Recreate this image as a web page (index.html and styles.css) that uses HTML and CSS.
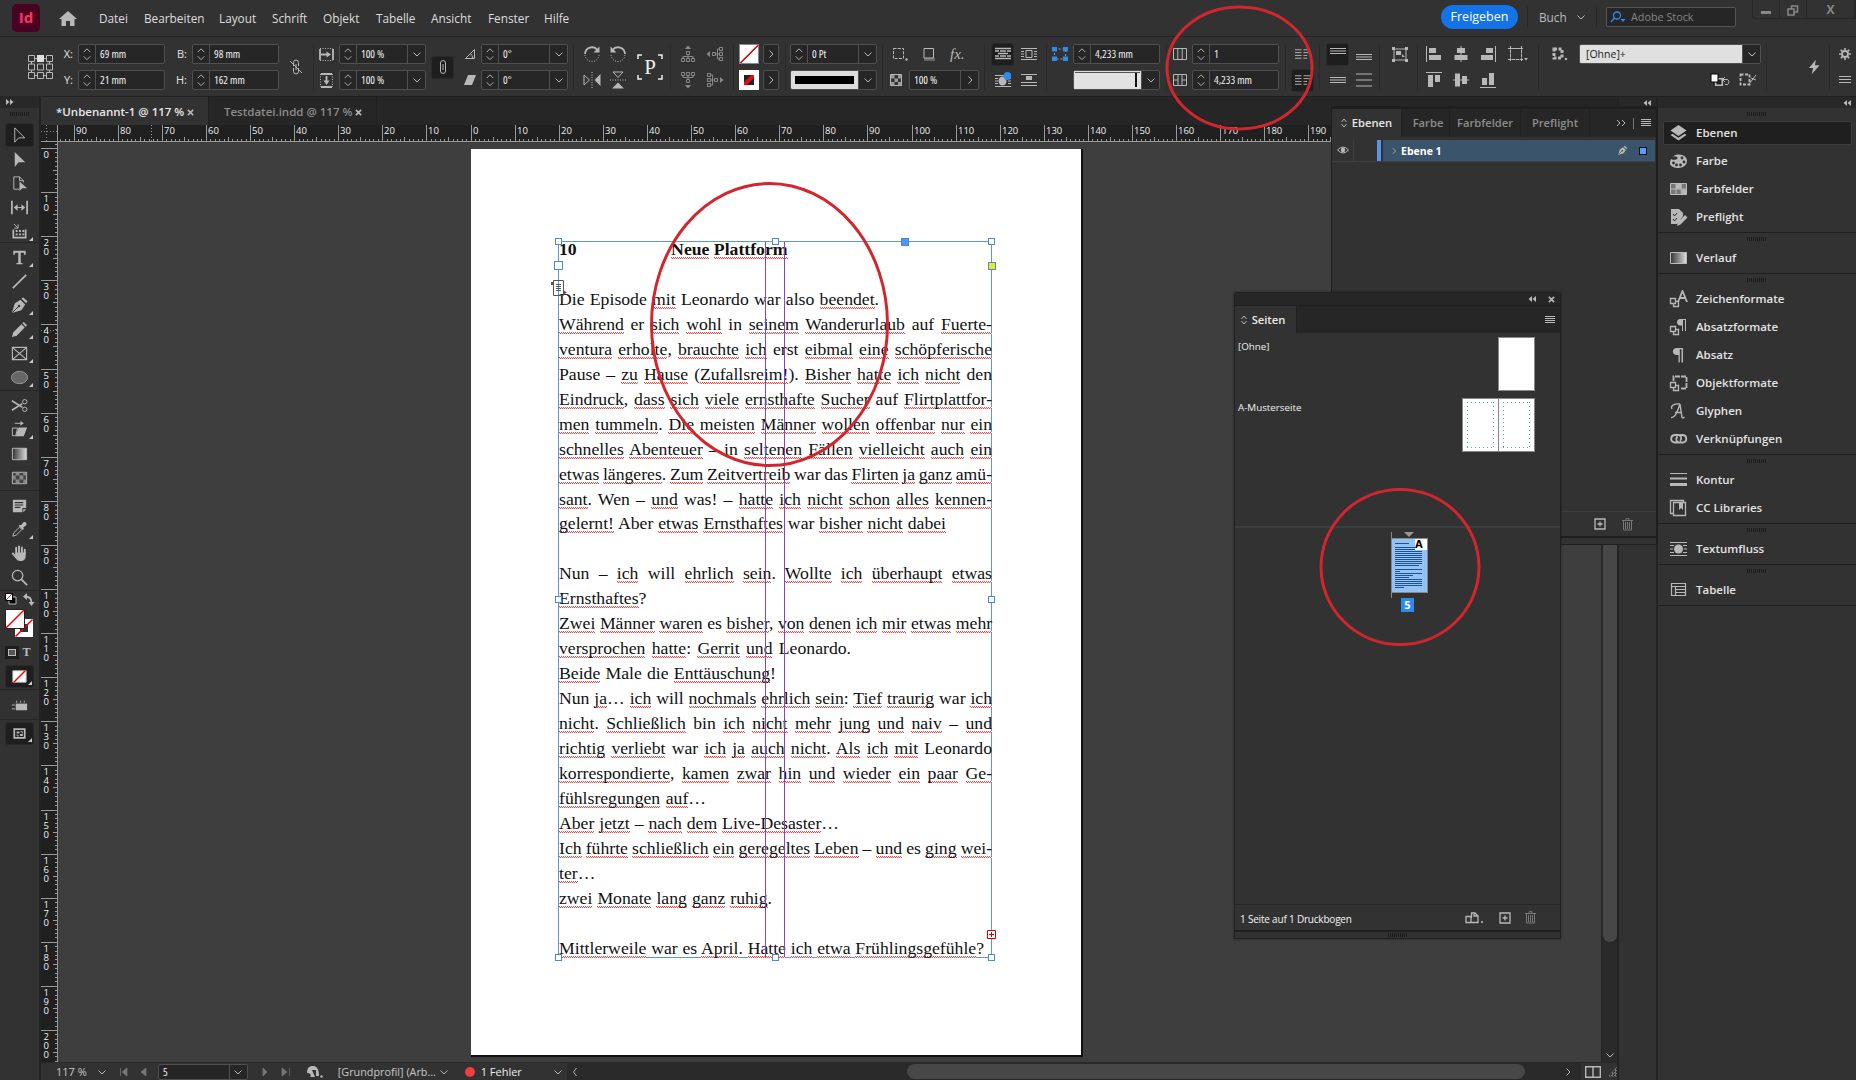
FILE: index.html
```html
<!DOCTYPE html>
<html lang="de">

<head>
    <meta charset="utf-8">
    <title>InDesign</title>
    <link rel="stylesheet" href="styles.css">
</head>

<body>
    <svg class="defs">
        <linearGradient id="grad"><stop offset="0" stop-color="#333"/><stop offset="1" stop-color="#ddd"/></linearGradient>
        <symbol id="spin" viewBox="0 0 17 18"><path d="M5 7l3.500-3.500L12 7M5 11.500l3.500 3.500L12 11.500" class="s"/></symbol>
        <symbol id="down" viewBox="0 0 10 10"><path d="M1.500 3.500L5 7l3.500-3.500" class="s"/></symbol>
        <symbol id="right" viewBox="0 0 10 10"><path d="M3.500 1.500L7 5 3.500 8.500" class="s"/></symbol>
        <symbol id="left" viewBox="0 0 10 10"><path d="M6.500 1L3.500 5l3 4" class="s"/></symbol>
        <symbol id="menu" viewBox="0 0 12 10"><path d="M0 1.500h12M0 4.500h12M0 7.500h12" class="s"/></symbol>
        <symbol id="menu4" viewBox="0 0 10 8"><path d="M0 .5h10M0 2.500h10M0 4.500h10M0 6.500h10" class="s"/></symbol>
        <symbol id="dbl" viewBox="0 0 8 6"><path d="M4 0v6L.5 3zM8 0v6L4.500 3z" class="f"/></symbol>
        <symbol id="sort" viewBox="0 0 6 10"><path d="M.5 4L3 1l2.500 3M.5 6L3 9l2.500-3" class="s"/></symbol>
        <symbol id="cross" viewBox="0 0 8 8"><path d="M1 1l6 6M7 1L1 7" class="s2"/></symbol>
        <symbol id="home" viewBox="0 0 18 15"><path d="M9 0L0 8h2.500v7h4.500v-5h4v5h4.500V8H18z" class="f"/></symbol>
        <symbol id="ref" viewBox="0 0 25 26"><path d="M.5 1.500h6v6h-6zM18.500 1.500h6v6h-6zM.5 10h6v6h-6zM9.500 10h6v6h-6zM18.500 10h6v6h-6zM.5 18.500h6v6h-6zM9.500 18.500h6v6h-6zM18.500 18.500h6v6h-6zM6.500 4.500h3M15.500 4.500h3M6.500 21.500h3M15.500 21.500h3M3.500 7.500v3M3.500 16v3M21.500 7.500v3M21.500 16v3" class="s"/><path d="M9 1h7v7H9z" fill="#e0e0e0"/></symbol>
        <symbol id="unlink" viewBox="0 0 14 16"><path d="M4.500 7V3.500a2.500 2.500 0 015 0V7M4.500 9v3.500a2.500 2.500 0 005 0V9M7 5v6M1 2l12 12" class="s"/></symbol>
        <symbol id="chain" viewBox="0 0 14 16"><path d="M4.500 8V4a2.500 2.500 0 015 0v4M4.500 8v4a2.500 2.500 0 005 0V8M7 5v6" class="s"/></symbol>
        <symbol id="scx" viewBox="0 0 15 15"><path d="M1 1.500h13M1 13.500h13" class="s dot"/><path d="M1 2v11M14 2v11M2 7.500h6" class="s2"/><path d="M7.500 4.500l4.500 3-4.500 3z" class="f"/></symbol>
        <symbol id="scy" viewBox="0 0 15 15"><path d="M1.500 1v13M13.500 1v13" class="s dot"/><path d="M2 1h11M2 14h11M7.500 3v5" class="s2"/><path d="M4.500 7.500l3 4.500 3-4.500z" class="f"/></symbol>
        <symbol id="angle" viewBox="0 0 12 12"><path d="M10.500 1.500L1.500 10.500h9M6 5.500c2 1 2.500 3 2.500 5M10.500 1.500v9" class="s"/></symbol>
        <symbol id="shear" viewBox="0 0 12 12"><path d="M4 1h8L8 11H0z" class="f"/></symbol>
        <symbol id="rot" viewBox="0 0 18 18"><path d="M2 9a7 7 0 0112.500-4" class="s2"/><path d="M16.500 1.500v6h-6z" class="f"/><path d="M2 10a7 7 0 0014-1" class="s dot"/></symbol>
        <symbol id="flip" viewBox="0 0 18 18"><path d="M1 4l5.500 5L1 14z" class="s"/><path d="M17.500 3v12L11.500 9z" class="f"/><path d="M9 1v16" class="s dot"/></symbol>
        <symbol id="flipv" viewBox="0 0 18 18"><path d="M4 1l5 5.500L14 1z" class="s"/><path d="M3 17.500h12L9 11.500z" class="f"/><path d="M1 9h16" class="s dot"/></symbol>
        <symbol id="tree" viewBox="0 0 18 18"><path d="M7.500 6.500h3v3h-3zM2.500 13.500h3v3h-3zM7.500 13.500h3v3h-3zM12.500 13.500h3v3h-3zM9 9.500v4M4 13v-1.500h10V13" class="s"/><path d="M6 4l3-3.500L12 4z" class="f"/></symbol>
        <symbol id="corner" viewBox="0 0 16 14"><path d="M1.500 1.500h10v10h-10z" class="s" stroke-dasharray="3 1.300"/><circle cx="14.500" cy="12.500" r="1.200" class="f"/></symbol>
        <symbol id="shadow" viewBox="0 0 14 14"><path d="M2 11h11v3H2z" fill="#666"/><path d="M2 1.500h9.500v9.500H2z" class="s"/></symbol>
        <symbol id="check" viewBox="0 0 12 12"><path d="M.5.5h11v11H.5z" class="s"/><path d="M1 1h3.500v3.500H1zM8 1h3v3.500H8zM4.500 4.500H8V8H4.500zM1 8h3.500v3H1zM8 8h3v3H8z" fill="#999"/></symbol>
        <symbol id="wrap0" viewBox="0 0 16 14"><path d="M0 1.500h16M0 4h4M5 4h6M12 4h4M3 6.500h10M0 9h4M5 9h6M12 9h4M0 11.500h16" class="s" stroke-width="1.300"/></symbol>
        <symbol id="wrap1" viewBox="0 0 16 14"><path d="M0 1.500h16M0 12.500h16M0 4.500h3M13 4.500h3M0 7h3M13 7h3M0 9.500h3M13 9.500h3M5 3.500h6v7H5z" class="s"/></symbol>
        <symbol id="wrap2" viewBox="0 0 16 16"><path d="M0 3.500h16M0 14.500h16M0 6.500h3M13 6.500h3M0 9h3M13 9h3M0 11.500h3M13 11.500h3" class="s"/><ellipse cx="7.500" cy="9" rx="4" ry="4.500" class="f"/><circle cx="12.500" cy="4" r="4" fill="#2d8ceb"/></symbol>
        <symbol id="wrap3" viewBox="0 0 16 14"><path d="M0 1.500h16M0 9.500h16M0 12.500h16" class="s"/><path d="M5 3h6v4H5z" class="f"/></symbol>
        <symbol id="bluesq" viewBox="0 0 16 14"><path d="M2.500 2h11v10h-11z" fill="none" stroke="#999" stroke-dasharray="2 2"/><path d="M0 0h5v4.500H0zM11 0h5v4.500h-5zM0 9.500h5V14H0zM11 9.500h5V14h-5z" fill="#2d8ceb"/></symbol>
        <symbol id="cols" viewBox="0 0 14 14"><path d="M.5 1.500h13v11H.5zM4.800 1.500v11M9.200 1.500v11" class="s"/></symbol>
        <symbol id="gut" viewBox="0 0 14 14"><path d="M.5 1.500h13v11H.5zM5 1.500v11M9 1.500v11M1 7h4M9 7h4" class="s"/></symbol>
        <symbol id="bal" viewBox="0 0 16 12"><path d="M0 1.500h7M9 1.500h7M0 4.500h7M9 4.500h7M0 7.500h7M9 7.500h4M0 10.500h7M9 10.500h4" class="s"/></symbol>
        <symbol id="vtop" viewBox="0 0 16 14"><path d="M0 1.500h16M0 4h16M0 6.500h16" class="s"/></symbol>
        <symbol id="vbot" viewBox="0 0 16 14"><path d="M0 7.500h16M0 10h16M0 12.500h16" class="s"/></symbol>
        <symbol id="vmid" viewBox="0 0 16 14"><path d="M0 4.500h16M0 7h16M0 9.500h16" class="s"/></symbol>
        <symbol id="vjus" viewBox="0 0 16 14"><path d="M0 1h16M0 7h16M0 13h16" class="s"/></symbol>
        <symbol id="fit" viewBox="0 0 16 15"><path d="M2 2h12v11H2z" class="s"/><path d="M0 0h3v3H0zM13 0h3v3h-3zM0 12h3v3H0zM13 12h3v3h-3zM4 4h5v4H4zM10 7l3 3h-3z" class="f"/></symbol>
        <symbol id="al" viewBox="0 0 16 16"><path d="M.5 0v16" class="s"/><path d="M3 2h7v5H3zM3 9h12v5H3z" class="f"/></symbol>
        <symbol id="ac" viewBox="0 0 16 16"><path d="M8 0v16" class="s"/><path d="M4 2h8v5H4zM1.500 9h13v5h-13z" class="f"/></symbol>
        <symbol id="tf" viewBox="0 0 20 16"><path d="M2.500 2.500h11v11h-11zM0 2.500h16M0 13.500h16M2.500 0v16M13.500 0v16" class="s" stroke-dasharray="3 1"/><path d="M16 12h4l-2 2.500z" class="f"/></symbol>
        <symbol id="mask" viewBox="0 0 18 14"><path d="M4 2h8v9H4z" class="s" stroke-width="3" stroke-dasharray="3 1.500"/><circle cx="16" cy="12" r="1.200" class="f"/></symbol>
        <symbol id="clr" viewBox="0 0 20 14"><path d="M5 5h8v8H5z" fill="#bbb"/><path d="M6.500 6.500h5v5h-5z" fill="#222"/><path d="M1 1h7v8H1z" fill="#fff" stroke="#000"/><path d="M15 4l-2.500 2.500L15 9M13 6.500h4c2.500 0 2.500 5 0 5h-2" class="s"/></symbol>
        <symbol id="clr2" viewBox="0 0 18 14"><path d="M1.500 1.500h9v10h-9z" class="s2" stroke-dasharray="3 1.500"/><path d="M10 11l7-9M12 5l5 2" class="s"/></symbol>
        <symbol id="bolt" viewBox="0 0 12 16"><path d="M7.500 0L0 9h4.500L3 16l8.500-10H6.500z" class="f"/></symbol>
        <symbol id="gear" viewBox="0 0 12 12"><circle cx="6" cy="6" r="3" class="s2"/><path d="M6 0v12M0 6h12M1.700 1.700l8.600 8.600M10.300 1.700l-8.600 8.600" class="s" stroke-width="1.600" stroke-dasharray="2.300 7.400"/></symbol>
        <symbol id="search" viewBox="0 0 16 12"><circle cx="7" cy="4.500" r="3.500" fill="none" stroke="#2d8ceb" stroke-width="1.300"/><path d="M4.500 7L1 11" stroke="#2d8ceb" stroke-width="1.400"/><path d="M10.500 8h5l-2.500 3z" fill="#2d8ceb"/></symbol>
        <symbol id="restore" viewBox="0 0 12 11"><path d="M4.500 1h6v6h-6z" fill="none" stroke="#888" stroke-width="1.500"/><path d="M1 4h6v6H1z" fill="#323232" stroke="#888" stroke-width="1.500"/></symbol>
        <symbol id="eye" viewBox="0 0 12 8"><path d="M.5 4Q6-2 11.500 4 6 10 .5 4z" class="s"/><circle cx="6" cy="4" r="2.200" class="f"/></symbol>
        <symbol id="new" viewBox="0 0 12 12"><path d="M1 1h10v10H1zM6 3.500v5M3.500 6h5" class="s" stroke-width="1.300"/></symbol>
        <symbol id="trash" viewBox="0 0 11 13"><path d="M0 2.500h11M4 2V.7h3V2M1.500 3v9h8V3M3.500 4v7M5.500 4v7M7.500 4v7" fill="none" stroke="#777"/></symbol>
        <symbol id="pgsize" viewBox="0 0 20 13"><path d="M1 5.500h5v6H1zM6 11.500h7V5l-3-3H6.500v5M9 2v3h4" class="s" stroke-width="1.300"/><circle cx="17" cy="11" r="1.100" class="f"/></symbol>

        <!-- tools -->
        <symbol id="t-sel" viewBox="0 0 20 20"><path d="M5 2v15l4-4.500h6.500z" class="s"/></symbol>
        <symbol id="t-dir" viewBox="0 0 20 20"><path d="M5 2v16l4-5h7z" class="f"/></symbol>
        <symbol id="t-page" viewBox="0 0 20 20"><path d="M10 16H4V3h6l4 4v2M10 3v4h4" class="s"/><path d="M10 8v10l3-3h5z" class="f"/></symbol>
        <symbol id="t-gap" viewBox="0 0 20 20"><path d="M2 3v14M18 3v14" class="s2"/><path d="M5 10h10" class="s"/><path d="M4 10l4-3.500v7zM16 10l-4-3.500v7z" class="f"/></symbol>
        <symbol id="t-cont" viewBox="0 0 20 20"><path d="M3.500 8v8.500h13V8" class="s2"/><path d="M4 2l4 4M8.500 2.500V6.500H4.500" class="s"/><path d="M6 8.500h2v2H6zM9.500 8.500h2v2h-2zM13 8.500h2v2h-2zM6 12h2v2H6zM9.500 12h2v2h-2zM13 12h2v2h-2z" class="f"/></symbol>
        <symbol id="t-type" viewBox="0 0 20 20"><path d="M3.500 3h13v4h-1.500l-.5-2h-3.200v10.500l2 .5v1H6.700v-1l2-.5V5H5.500L5 7H3.500z" class="f"/></symbol>
        <symbol id="t-line" viewBox="0 0 20 20"><path d="M3 17L17 3" class="s2"/></symbol>
        <symbol id="t-pen" viewBox="0 0 20 20"><path d="M2 18l3-10 6-4 5 5-4 6z" class="f"/><path d="M12 2.500l5 5 1.500-2-4.500-4z" class="f"/><path d="M2.500 17.500L9 11" stroke="#323232"/><circle cx="9.500" cy="10.500" r="1.300" fill="#323232"/></symbol>
        <symbol id="t-pencil" viewBox="0 0 20 20"><path d="M2 18l1.500-5L12 4.500l3.500 3.500L7 16.500zM13 3.500l1.500-1.500L18 5.500 16.500 7z" class="f"/></symbol>
        <symbol id="t-frame" viewBox="0 0 20 20"><path d="M2.500 3.500h15v13h-15zM2.500 3.500l15 13M17.500 3.500l-15 13" class="s" stroke-width="1.200"/></symbol>
        <symbol id="t-ell" viewBox="0 0 20 20"><ellipse cx="10" cy="10" rx="8.500" ry="6.500" fill="#666" stroke="#999"/></symbol>
        <symbol id="t-cut" viewBox="0 0 20 20"><path d="M2 5l11 7M2 15l11-7" class="s2"/><circle cx="15.500" cy="6" r="2.300" class="s"/><circle cx="15.500" cy="14" r="2.300" class="s"/></symbol>
        <symbol id="t-free" viewBox="0 0 20 20"><path d="M9 8h9l-3.500 9H6z" class="f"/><path d="M2.500 8.500H8l-2 8H2.500zM5 3.500h7" class="s"/><path d="M11 1l3.500 2.500L11 6z" class="f"/></symbol>
        <symbol id="t-grad" viewBox="0 0 20 20"><path d="M2.500 4.500h15v12h-15z" fill="url(#grad)" stroke="#bbb"/></symbol>
        <symbol id="t-feather" viewBox="0 0 20 20"><path d="M2.500 4.500h15v12h-15z" fill="#444" stroke="#bbb"/><path d="M6 5h4v3H6zM14 5h3v3h-3zM3 8h3v4H3zM10 8h4v4h-4zM6 12h4v4H6zM14 12h3v4h-3z" fill="#888"/></symbol>
        <symbol id="t-note" viewBox="0 0 20 20"><path d="M3 4h14v8.500h-4V17H3zM14 14h3l-3 3z" class="f"/><path d="M5 7h9M5 9.500h9M5 12h6" stroke="#323232" stroke-width="1.200"/></symbol>
        <symbol id="t-eye" viewBox="0 0 20 20"><path d="M3 17l1-3.500 6-6 2.500 2.500-6 6z" class="s"/><path d="M9 6l1.500-1 1 .5 2.500-3c2-1.500 4.500 1 3 3l-3 2.500.5 1.500-1 1z" class="f"/></symbol>
        <symbol id="t-hand" viewBox="0 0 20 20"><path d="M6.500 10V4M9.500 9V2.500M12.500 9.500V3.500M15.500 10.500V6M3 10l3.500 4" fill="none" stroke="#b8b8b8" stroke-width="2" stroke-linecap="round"/><path d="M5.500 9h11v4c0 3-2 5-5 5-3.500 0-4-1-6-4z" class="f"/></symbol>
        <symbol id="t-zoom" viewBox="0 0 20 20"><circle cx="8" cy="8" r="5.500" class="s" stroke-width="1.300"/><path d="M12 12l6 6" class="s2"/></symbol>
        <symbol id="t-view" viewBox="0 0 20 20"><path d="M6 8h12v7H6z" class="f"/><path d="M2 9.500h3M2 13.500h3M7 5v2M11 5v2M15 5v2" class="s"/></symbol>
        <symbol id="t-mode" viewBox="0 0 20 20"><path d="M4.500 5.500h11v9h-11z" class="s2"/><path d="M7 8h3v2H7zM10.500 10.500h3v2h-3z" class="f"/><path d="M11 8h2v2M7.500 11v1.500h2" class="s"/></symbol>

        <!-- panel icons -->
        <symbol id="p-layers" viewBox="0 0 19 18"><path d="M9.500 1l8 5.500-8 5.500-8-5.500z" class="f"/><path d="M1.500 11l2-1.300 6 4 6-4 2 1.300-8 5.500z" class="f"/></symbol>
        <symbol id="p-color" viewBox="0 0 19 18"><path d="M1 11c0-6 5-8.500 9-8.500 5 0 8 3 8 6.500 0 4-4 7-8.500 7S1 14.500 1 11z" class="f"/><g fill="#323232"><ellipse cx="5" cy="6" rx="3.500" ry="1.800"/><circle cx="13" cy="6" r="1.400"/><circle cx="15" cy="10" r="1.400"/><circle cx="11.500" cy="13" r="1.400"/><circle cx="7.500" cy="13" r="1.400"/><circle cx="4.500" cy="11" r="1.400"/></g></symbol>
        <symbol id="p-swatch" viewBox="0 0 19 18"><path d="M1.500 3.500h16v11h-16z" fill="#777" stroke="#bbb"/><path d="M7 4h5v5H7zM12.500 9.500H17V14h-4.500z" class="f"/><path d="M1.500 9h16M7 4v10M12.200 4v10" class="s"/></symbol>
        <symbol id="p-pre" viewBox="0 0 19 18"><path d="M2 1h8l4 4v3l-6 8H2zM9 14l7-7 2.500 2.500-7 7L8 18z" class="f"/><path d="M4 6l1.500 2L8 5M4 11l1.500 2L8 10" stroke="#323232" fill="none"/></symbol>
        <symbol id="p-grad" viewBox="0 0 19 18"><path d="M1.500 3.500h16v11h-16z" fill="url(#grad)" stroke="#bbb"/></symbol>
        <symbol id="p-over" viewBox="0 0 19 18"><path d="M1.500 8.500h5v5h-5zM4.500 13.500v3h5v-5h-3" class="s" stroke-width="1.300"/></symbol>
        <symbol id="p-char" viewBox="0 0 19 18"><use href="#p-over"/><path d="M9 12l4.500-11L18 12M10.500 8h6" class="s2"/></symbol>
        <symbol id="p-para" viewBox="0 0 19 18"><use href="#p-over"/><path d="M17 1h-6c-4 0-4 6.500 0 6.500h2V13h1V2h2v11h1z" class="f"/></symbol>
        <symbol id="p-pil" viewBox="0 0 19 18"><path d="M14 2H8C2.500 2 2.500 9 8 9h1.500v7.500h1.300V3.300h1.700v13.200H14z" class="f"/></symbol>
        <symbol id="p-obj" viewBox="0 0 19 18"><use href="#p-over"/><path d="M4.500 7V2.500h13v12H11" class="s2" stroke-dasharray="5 1"/></symbol>
        <symbol id="p-glyph" viewBox="0 0 19 18"><path d="M2 15.500c4 1 7-7 9-13.500l2 13.500c.5.800 1.500.5 2.500-.5M3 7C1 3 6 1.500 11 2M6 10.500h6.500" class="s" stroke-width="1.400"/></symbol>
        <symbol id="p-link" viewBox="0 0 19 18"><path d="M9 12.500H5.500a4 3.800 0 010-7.500H9c3 0 4.500 3.500 2 6M10.500 5H14a4 3.800 0 010 7.500h-3.500c-3 0-4.500-3.500-2-6" class="s2"/></symbol>
        <symbol id="p-stroke" viewBox="0 0 19 18"><path d="M1 2h17v1H1zM1 6.500h17v2H1zM1 12h17v3H1z" class="f"/></symbol>
        <symbol id="p-cc" viewBox="0 0 19 18"><path d="M4.500 3.500h12v13h-12zM4 14.500H1.500V1.500h13V3" class="s" stroke-width="1.300"/><path d="M10 4h4v7l-2-2-2 2z" class="f"/></symbol>
        <symbol id="p-flow" viewBox="0 0 19 18"><path d="M1 2.500h17M1 15.500h17M1 5.500h4M14 5.500h4M1 9h3M15 9h3M1 12.500h4M14 12.500h4" class="s" stroke-width="1.200"/><circle cx="9.500" cy="9" r="4.500" class="f"/></symbol>
        <symbol id="p-table" viewBox="0 0 19 18"><path d="M2.500 2.500h14v12h-14zM2.500 5.500h14M6.500 5.500v9M6.500 8.500h10M6.500 11.500h10" class="s" stroke-width="1.200"/></symbol>
    </svg>

    <div class="topbar">
        <div class="logo">Id</div>
        <svg class="home"><use href="#home"/></svg>
        <div class="menus">
            <span class="m1">Datei</span><span class="m2">Bearbeiten</span><span class="m3">Layout</span><span class="m4">Schrift</span><span class="m5">Objekt</span><span class="m6">Tabelle</span><span class="m7">Ansicht</span><span class="m8">Fenster</span><span class="m9">Hilfe</span>
        </div>
        <div class="share">Freigeben</div>
        <div class="space">Buch <svg width="10" height="10"><use href="#down"/></svg></div>
        <div class="stock"><svg width="16" height="12"><use href="#search"/></svg>Adobe Stock</div>
        <div class="winbtns"><span class="min"></span><span><svg width="12" height="11"><use href="#restore"/></svg></span><span class="x">X</span></div>
    </div>

    <div class="control">
        <div class="g g1">
            <svg class="tall" width="25" height="26"><use href="#ref"/></svg>
            <label>X:</label>
            <div class="field"><svg class="spin"><use href="#spin"/></svg><b>69 mm</b></div>
            <label>B:</label>
            <div class="field"><svg class="spin"><use href="#spin"/></svg><b>98 mm</b></div>
            <svg class="tall" width="14" height="16"><use href="#unlink"/></svg>
            <label>Y:</label>
            <div class="field"><svg class="spin"><use href="#spin"/></svg><b>21 mm</b></div>
            <label>H:</label>
            <div class="field"><svg class="spin"><use href="#spin"/></svg><b>162 mm</b></div>
        </div>
        <div class="g g2">
            <svg class="i15"><use href="#scx"/></svg>
            <div class="field"><svg class="spin"><use href="#spin"/></svg><b>100 %</b><i><svg class="i10"><use href="#down"/></svg></i></div>
            <div class="tall on chain"><svg width="14" height="16"><use href="#chain"/></svg></div>
            <svg class="i12"><use href="#angle"/></svg>
            <div class="field"><svg class="spin"><use href="#spin"/></svg><b>0°</b><i><svg class="i10"><use href="#down"/></svg></i></div>
            <svg class="i15"><use href="#scy"/></svg>
            <div class="field"><svg class="spin"><use href="#spin"/></svg><b>100 %</b><i><svg class="i10"><use href="#down"/></svg></i></div>
            <svg class="i12"><use href="#shear"/></svg>
            <div class="field"><svg class="spin"><use href="#spin"/></svg><b>0°</b><i><svg class="i10"><use href="#down"/></svg></i></div>
        </div>
        <div class="g g3">
            <svg class="i18"><use href="#rot"/></svg>
            <svg class="i18 mirror"><use href="#rot"/></svg>
            <div class="tall pbox"><svg width="26" height="26" viewBox="0 0 26 26"><path d="M1 5V1h4M21 1h4v4M1 21v4h4M21 25h4v-4" fill="none" stroke="#eee" stroke-width="1.500"/></svg><span>P</span></div>
            <svg class="i18"><use href="#flip"/></svg>
            <svg class="i18"><use href="#flipv"/></svg>
        </div>
        <div class="g g4 dim">
            <svg class="i18"><use href="#tree"/></svg>
            <svg class="i18 ccw"><use href="#tree"/></svg>
            <svg class="i18 flipy"><use href="#tree"/></svg>
            <svg class="i18 cw"><use href="#tree"/></svg>
        </div>
        <div class="g g5">
            <div class="none"></div>
            <div class="field"><i class="only"><svg class="i10"><use href="#right"/></svg></i></div>
            <div class="none ring"></div>
            <div class="field"><i class="only"><svg class="i10"><use href="#right"/></svg></i></div>
        </div>
        <div class="g g6">
            <div class="field"><svg class="spin"><use href="#spin"/></svg><b>0 Pt</b><i><svg class="i10"><use href="#down"/></svg></i></div>
            <div class="field"><div class="stroke"></div><i><svg class="i10"><use href="#down"/></svg></i></div>
        </div>
        <div class="g g7">
            <div class="trio"><svg width="16" height="14"><use href="#corner"/></svg><svg width="14" height="14"><use href="#shadow"/></svg><em>fx.</em></div>
            <svg class="i12"><use href="#check"/></svg>
            <div class="field"><b class="pad">100 %</b><i><svg class="i10"><use href="#right"/></svg></i></div>
        </div>
        <div class="g g8">
            <div class="on"><svg width="16" height="14"><use href="#wrap0"/></svg></div>
            <svg width="16" height="14"><use href="#wrap1"/></svg>
            <svg width="16" height="16"><use href="#wrap2"/></svg>
            <svg width="16" height="14"><use href="#wrap3"/></svg>
        </div>
        <div class="g g9">
            <svg width="16" height="14"><use href="#bluesq"/></svg>
            <div class="field"><svg class="spin"><use href="#spin"/></svg><b>4,233 mm</b></div>
            <span></span>
            <div class="field"><div class="cornerbox"></div><i><svg class="i10"><use href="#down"/></svg></i></div>
        </div>
        <div class="g g10">
            <svg width="14" height="14"><use href="#cols"/></svg>
            <div class="field"><svg class="spin"><use href="#spin"/></svg><b>1</b></div>
            <svg width="14" height="14"><use href="#gut"/></svg>
            <div class="field"><svg class="spin"><use href="#spin"/></svg><b>4,233 mm</b></div>
        </div>
        <div class="g g11">
            <svg width="15" height="12"><use href="#bal"/></svg>
            <div class="on"><svg width="15" height="12"><use href="#bal"/></svg></div>
        </div>
        <div class="g g12">
            <div class="on"><svg width="16" height="14"><use href="#vtop"/></svg></div>
            <svg width="16" height="14"><use href="#vbot"/></svg>
            <svg width="16" height="14"><use href="#vmid"/></svg>
            <svg width="16" height="14"><use href="#vjus"/></svg>
        </div>
        <div class="g g13"><svg width="16" height="15"><use href="#fit"/></svg></div>
        <div class="g g14">
            <svg class="i16"><use href="#al"/></svg>
            <svg class="i16"><use href="#ac"/></svg>
            <svg class="i16 mirror"><use href="#al"/></svg>
            <svg width="20" height="16"><use href="#tf"/></svg>
            <svg class="i16 cw"><use href="#al"/></svg>
            <svg class="i16 cw"><use href="#ac"/></svg>
            <svg class="i16 ccw"><use href="#al"/></svg>
        </div>
        <div class="g g15">
            <svg width="18" height="14"><use href="#mask"/></svg>
            <div class="field"><div class="style">[Ohne]+</div><i><svg class="i10"><use href="#down"/></svg></i></div>
            <div class="duo"><svg width="20" height="14"><use href="#clr"/></svg><svg width="18" height="14"><use href="#clr2"/></svg></div>
        </div>
        <div class="g g16"><svg class="tall" width="11" height="16"><use href="#bolt"/></svg></div>
        <div class="g g17"><svg class="i12"><use href="#gear"/></svg><svg width="12" height="10"><use href="#menu"/></svg></div>
    </div>

    <div class="main">
        <div class="tools">
            <div class="thead"><svg class="dbl mirror"><use href="#dbl"/></svg></div>
            <div class="grip"></div>
            <div class="tset first">
                <div class="tool on"><svg><use href="#t-sel"/></svg></div>
                <div class="tool"><svg><use href="#t-dir"/></svg></div>
                <div class="tool"><svg><use href="#t-page"/></svg></div>
                <div class="tool"><svg><use href="#t-gap"/></svg></div>
                <div class="tool more"><svg><use href="#t-cont"/></svg></div>
            </div>
            <div class="tset">
                <div class="tool more"><svg><use href="#t-type"/></svg></div>
                <div class="tool"><svg><use href="#t-line"/></svg></div>
                <div class="tool more"><svg><use href="#t-pen"/></svg></div>
                <div class="tool more"><svg><use href="#t-pencil"/></svg></div>
                <div class="tool more"><svg><use href="#t-frame"/></svg></div>
                <div class="tool more"><svg><use href="#t-ell"/></svg></div>
            </div>
            <div class="tset">
                <div class="tool"><svg><use href="#t-cut"/></svg></div>
                <div class="tool more"><svg><use href="#t-free"/></svg></div>
                <div class="tool"><svg><use href="#t-grad"/></svg></div>
                <div class="tool"><svg><use href="#t-feather"/></svg></div>
            </div>
            <div class="tset">
                <div class="tool"><svg><use href="#t-note"/></svg></div>
                <div class="tool more"><svg><use href="#t-eye"/></svg></div>
                <div class="tool"><svg><use href="#t-hand"/></svg></div>
                <div class="tool"><svg><use href="#t-zoom"/></svg></div>
            </div>
            <div class="tset colors">
                <svg width="30" height="14" viewBox="0 0 30 14"><path d="M4 4h7v7H4z" fill="#000" stroke="#bbb"/><path d="M.5.5h7v7h-7z" fill="#fff" stroke="#000"/><path d="M1 7l6-6" stroke="#e22"/><path d="M20 3.500c5 0 6.500 2 6.500 6" class="s2"/><path d="M18 3.500L22 0v7zM23.500 9h6l-3 4z" class="f"/></svg>
                <svg width="30" height="30" viewBox="0 0 30 30"><path d="M10 10h18v18H10z" fill="#fff"/><path d="M15 15h8v8h-8z" fill="#323232"/><path d="M10.500 27.500l17-17" stroke="#e00" stroke-width="1.500"/><path d="M.5.500h19v19H.5z" fill="#fff" stroke="#222"/><path d="M1 19L19 1" stroke="#e00" stroke-width="1.500"/></svg>
                <div class="ft"><span><u></u></span><b>T</b></div>
                <div class="tool on more"><svg viewBox="0 0 20 20"><path d="M3 4h14v12H3z" fill="#fff" stroke="#bbb"/><path d="M4 16L16 4" stroke="#e00" stroke-width="1.500"/></svg></div>
            </div>
            <div class="tset"><div class="tool wide"><svg><use href="#t-view"/></svg></div></div>
            <div class="tset"><div class="tool on more"><svg><use href="#t-mode"/></svg></div></div>
        </div>

        <div class="doc">
            <div class="tabs">
                <div class="tab active"><span>*Unbenannt-1 @ 117 %</span><svg width="7" height="7"><use href="#cross"/></svg></div>
                <div class="tab"><span>Testdatei.indd @ 117 %</span><svg width="7" height="7"><use href="#cross"/></svg></div>
            </div>
            <div class="rulerrow">
                <div class="origin"></div>
                <svg id="hruler" width="1559" height="17"></svg>
            </div>
            <div class="work">
                <svg id="vruler" width="17" height="920"></svg>
                <div class="paste">
                    <div class="page">
                        <div class="frame">
                            <div id="story"></div>
                            <i class="col c1"></i><i class="col c2"></i>
                            <i class="h tl"></i><i class="h tm"></i><i class="h tr"></i><i class="h ml"></i><i class="h mr"></i><i class="h bl"></i><i class="h bm"></i><i class="h br"></i>
                            <i class="h in"></i><i class="h blue"></i><i class="h yellow"></i>
                            <svg class="over" width="9" height="9" viewBox="0 0 9 9"><path d="M.5.5h8v8h-8z" fill="#fff" stroke="#c00"/><path d="M4.500 2v5M2 4.500h5" stroke="#c00"/></svg>
                            <svg class="anchor" width="16" height="18" viewBox="0 0 16 18"><path d="M2.500 1.500h10v15h-10zM5 5.500h5M5 7.500h5M5 9.500h5M5 11.500h5" fill="none" stroke="#555"/><path d="M0 3h3v3H0zM12 11l4 2.500-4 2.500z" fill="#555"/></svg>
                        </div>
                    </div>
                </div>
                <div class="vscroll"><div></div><svg class="i10"><use href="#down"/></svg></div>
            </div>
            <div class="status">
                <span class="z">117 %</span><svg class="i10 a"><use href="#down"/></svg>
                <svg class="nav" width="60" height="10" viewBox="0 0 60 10"><path d="M1.500 1v8M8 1v8L3 5zM27 1v8L22 5z" fill="#777" stroke="#777" stroke-width=".7"/></svg>
                <div class="field pg"><b>5</b><i><svg class="i10"><use href="#down"/></svg></i></div>
                <svg class="nav2" width="44" height="10" viewBox="0 0 44 10"><path d="M1 1v8l4-4zM20 1v8l5-4zM27.500 1v8" fill="#777" stroke="#777" stroke-width=".7"/></svg>
                <svg class="open" width="17" height="13" viewBox="0 0 17 13"><path d="M1 8C1 2 4 1 7 1s6 2 6 10h-3V5H6l3 7H4c2-2 0-4-3-4z" class="f"/><circle cx="15.500" cy="11.500" r="1.200" class="f"/></svg>
                <span class="prof">[Grundprofil] (Arb...</span><svg class="i10"><use href="#down"/></svg>
                <u class="dot"></u><span class="err">1 Fehler</span><svg class="i10 e"><use href="#down"/></svg>
                <div class="hscroll"><svg class="i10"><use href="#left"/></svg><div></div><svg class="i10"><use href="#right"/></svg></div>
                <svg class="split" width="16" height="12" viewBox="0 0 16 12"><path d="M.7.700h14.600v10.600H.7zM8 1v10" class="s" stroke-width="1.400"/></svg>
                <u class="sizer"></u>
            </div>
        </div>

        <div class="dockgap"><div class="dhead"><svg class="dbl"><use href="#dbl"/></svg></div></div>

        <div class="dock">
            <div class="dhead"><svg class="dbl"><use href="#dbl"/></svg></div>
            <div class="dset">
                <div class="grip"></div>
                <div class="item active"><svg><use href="#p-layers"/></svg>Ebenen</div>
                <div class="item"><svg><use href="#p-color"/></svg>Farbe</div>
                <div class="item"><svg><use href="#p-swatch"/></svg>Farbfelder</div>
                <div class="item"><svg><use href="#p-pre"/></svg>Preflight</div>
            </div>
            <div class="dset">
                <div class="grip"></div>
                <div class="item"><svg><use href="#p-grad"/></svg>Verlauf</div>
            </div>
            <div class="dset">
                <div class="grip"></div>
                <div class="item"><svg><use href="#p-char"/></svg>Zeichenformate</div>
                <div class="item"><svg><use href="#p-para"/></svg>Absatzformate</div>
                <div class="item"><svg><use href="#p-pil"/></svg>Absatz</div>
                <div class="item"><svg><use href="#p-obj"/></svg>Objektformate</div>
                <div class="item"><svg><use href="#p-glyph"/></svg>Glyphen</div>
                <div class="item"><svg><use href="#p-link"/></svg>Verknüpfungen</div>
            </div>
            <div class="dset">
                <div class="grip"></div>
                <div class="item"><svg><use href="#p-stroke"/></svg>Kontur</div>
                <div class="item"><svg><use href="#p-cc"/></svg>CC Libraries</div>
            </div>
            <div class="dset">
                <div class="grip"></div>
                <div class="item"><svg><use href="#p-flow"/></svg>Textumfluss</div>
            </div>
            <div class="dset">
                <div class="grip"></div>
                <div class="item"><svg><use href="#p-table"/></svg>Tabelle</div>
            </div>
        </div>
    </div>

    <div class="layers">
        <div class="ptabs">
            <div class="ptab active"><svg width="6" height="10"><use href="#sort"/></svg>Ebenen</div>
            <div class="ptab w2">Farbe</div>
            <div class="ptab w3">Farbfelder</div>
            <div class="ptab w4">Preflight</div>
            <div class="pmenu"><svg class="arr" width="10" height="8" viewBox="0 0 10 8"><path d="M1 1l3 3-3 3M6 1l3 3-3 3" class="s"/></svg><u></u><svg width="10" height="8"><use href="#menu4"/></svg></div>
        </div>
        <div class="row">
            <span class="eye"><svg width="12" height="8"><use href="#eye"/></svg></span>
            <span class="lock"></span>
            <span class="name"><svg width="8" height="8"><use href="#right"/></svg>Ebene 1<svg class="pen" width="11" height="11"><use href="#t-pen"/></svg><u></u></span>
        </div>
        <div class="pbody"></div>
        <div class="pfoot"><svg width="12" height="12"><use href="#new"/></svg><svg width="11" height="13"><use href="#trash"/></svg></div>
        <div class="pend"></div>
    </div>

    <div class="pages">
        <div class="phead"><svg class="dbl"><use href="#dbl"/></svg><svg width="7" height="7"><use href="#cross"/></svg></div>
        <div class="ptabs">
            <div class="ptab active"><svg width="6" height="10"><use href="#sort"/></svg>Seiten</div>
            <div class="pmenu"><svg width="10" height="8"><use href="#menu4"/></svg></div>
        </div>
        <div class="masters">
            <div class="master"><span>[Ohne]</span><div class="thumb"></div></div>
            <div class="master"><span>A-Musterseite</span><div class="thumb"><i></i></div><div class="thumb"><i></i></div></div>
        </div>
        <div class="spread">
            <div class="mark"></div>
            <div class="pthumb">
                <span>A</span>
                <div id="mini"></div>
            </div>
            <div class="num">5</div>
        </div>
        <div class="pgfoot"><span>1 Seite auf 1 Druckbogen</span><svg width="20" height="13"><use href="#pgsize"/></svg><svg width="12" height="12"><use href="#new"/></svg><svg width="11" height="13"><use href="#trash"/></svg></div>
        <div class="presize"><div class="grip"></div></div>
    </div>

    <svg class="marks" width="1856" height="1080">
        <ellipse cx="1239.500" cy="68" rx="72.500" ry="61"/>
        <ellipse cx="769.500" cy="324.500" rx="118" ry="141"/>
        <ellipse cx="1400" cy="567" rx="79" ry="77.500"/>
    </svg>

    <script src="script.js"></script>
</body>

</html>
```

FILE: styles.css
```css
* {
    box-sizing: border-box;
}

body {
    margin: 0;
    width: 1856px;
    height: 1080px;
    overflow: hidden;
    background: #323232;
    color: #e2e2e2;
    font: 11px/14px "Open Sans", "Noto Sans", sans-serif;
    display: flex;
    flex-direction: column;
}

.defs {
    position: absolute;
    width: 0;
    height: 0;
}

svg {
    display: block;
    flex: none;
}

.s { fill: none; stroke: #b8b8b8; }
.s2 { fill: none; stroke: #b8b8b8; stroke-width: 1.8; }
.f { fill: #b8b8b8; }
.dot { stroke-dasharray: 1 1.5; }

.i10 { width: 10px; height: 10px; }
.i12 { width: 12px; height: 12px; }
.i15 { width: 15px; height: 15px; }
.i16 { width: 16px; height: 16px; }
.i18 { width: 18px; height: 18px; }
.dbl { width: 8px; height: 6px; }

.mirror { transform: scaleX(-1); }
.flipy { transform: scaleY(-1); }
.cw { transform: rotate(90deg); }
.ccw { transform: rotate(-90deg); }

/* menu bar */
.topbar {
    height: 36px;
    flex: none;
    display: flex;
    align-items: flex-start;
    font-size: 11.800px;
}

.logo {
    width: 28px;
    height: 28px;
    margin: 4px 0 0 12px;
    border-radius: 5px;
    background: #49021f;
    color: #ff3366;
    font: bold 15px/26px "Open Sans", sans-serif;
    text-align: center;
}

.home {
    width: 18px;
    height: 15px;
    margin: 11px 22px 0 19px;
}

.menus {
    display: flex;
    padding-top: 10px;
    line-height: 16px;
    color: #ddd;
    width: 1342px;
}

.menus span { white-space: nowrap; }
.m1 { width: 45px; }
.m2 { width: 75px; }
.m3 { width: 53px; }
.m4 { width: 51px; }
.m5 { width: 53px; }
.m6 { width: 55px; }
.m7 { width: 57px; }
.m8 { width: 56px; }

.share {
    width: 77px;
    height: 24px;
    margin-top: 5px;
    border-radius: 12px;
    background: #1473e6;
    color: #fff;
    font-size: 12.500px;
    line-height: 24px;
    text-align: center;
}

.space {
    display: flex;
    align-items: center;
    gap: 9px;
    margin: 7px 0 0 9px;
    width: 70px;
    height: 20px;
    padding-left: 11px;
    border-left: 1px solid #262626;
    border-right: 1px solid #262626;
    color: #bbb;
}

.stock {
    display: flex;
    align-items: center;
    gap: 5px;
    width: 130px;
    height: 20px;
    margin: 7px 0 0 9px;
    padding-left: 3px;
    border: 1px solid #555;
    border-radius: 2px;
    background: #262626;
    color: #858585;
    font-size: 10.800px;
    white-space: nowrap;
}

.winbtns {
    display: flex;
    width: 104px;
    height: 19px;
    margin-left: 16px;
    border: 1px solid #282828;
    border-top: 0;
    border-radius: 0 0 0 4px;
    color: #888;
}

.winbtns span {
    width: 27px;
    display: flex;
    justify-content: center;
    padding-top: 5px;
    border-right: 1px solid #282828;
}

.winbtns .min::before {
    content: "";
    width: 10px;
    height: 3px;
    margin-top: 6px;
    background: #888;
}

.winbtns .x {
    width: 48px;
    padding-top: 0;
    font: bold 12px/19px "Open Sans", sans-serif;
}

/* control bar: two rows of fields per group */
.control {
    height: 60px;
    flex: none;
    display: flex;
    border-top: 1px solid #252525;
}

.g {
    display: grid;
    grid-template-rows: 20px 20px;
    row-gap: 6px;
    align-content: start;
    align-items: center;
    justify-items: center;
    margin-top: 7px;
    height: 46px;
    flex: none;
    border-left: 1px solid #2a2a2a;
}

.g .tall { grid-row: 1 / 3; }
.g .field { justify-self: stretch; }
.g label { justify-self: end; padding-right: 5px; font-stretch: 90%; }

.g1 { width: 313px; padding-left: 27px; border: 0; grid-template-columns: 26px 25px 87px 27px 87px 34px; }
.g1 .tall:first-child { grid-column: 1; }
.g1 .tall:nth-child(6) { grid-column: 6; }
.g2 { width: 260px; grid-template-columns: 25px 87px 33px 22px 87px; }
.g3 { width: 97px; grid-template-columns: 35px 18px 46px; }
.g4 { width: 63px; grid-template-columns: 34px 20px; }
.g5 { width: 52px; padding-left: 5px; grid-template-columns: 20px 16px; column-gap: 4px; }
.g6 { width: 97px; padding-left: 4px; grid-template-columns: 87px; }
.g7 { width: 102px; grid-template-columns: 26px 70px; }
.g8 { width: 62px; grid-template-columns: 35px 18px; }
.g9 { width: 120px; grid-template-columns: 26px 87px; }
.g10 { width: 119px; grid-template-columns: 25px 87px; }
.g11 { width: 34px; grid-template-columns: 33px; }
.g12 { width: 60px; grid-template-columns: 35px 18px; }
.g13 { width: 38px; grid-template-columns: 39px; }
.g14 { width: 121px; grid-template-columns: 31px 24px 30px 30px; }
.g15 { width: 228px; grid-template-columns: 40px 182px; }
.g16 { width: 63px; padding-left: 32px; grid-template-columns: 31px; }
.g17 { width: 27px; grid-template-columns: 29px; }

.dim { opacity: .65; }

.chain {
    grid-column: 3;
    width: 23px;
    height: 23px;
}

.pbox {
    grid-column: 3;
    display: grid;
    place-items: center;
}

.pbox > * { grid-area: 1 / 1; }
.pbox span { font: 21px/26px "Liberation Serif", serif; color: #eee; }

.on {
    display: flex;
    align-items: center;
    justify-content: center;
    background: #1e1e1e;
    border: 1px solid #2a2a2a;
    border-radius: 3px;
}

.g8 .on, .g11 .on, .g12 .on {
    width: 23px;
    height: 23px;
}

.field {
    display: flex;
    height: 20px;
    border: 1px solid #505050;
    border-radius: 2px;
    background: #262626;
    overflow: hidden;
}

.field .spin {
    width: 17px;
    height: 18px;
    border-right: 1px solid #505050;
}

.field b {
    flex: 1;
    padding-left: 4px;
    font-weight: normal;
    font-stretch: 87%;
    line-height: 18px;
    color: #f0f0f0;
    white-space: nowrap;
}

.field i {
    width: 18px;
    border-left: 1px solid #505050;
    display: flex;
    align-items: center;
    justify-content: center;
}

.field .only { border: 0; width: 14px; }

.none {
    width: 20px;
    height: 20px;
    border: 1px solid #888;
    background: linear-gradient(to bottom right, transparent 47%, #e01010 48%, #e01010 54%, transparent 55%), #fff;
}

.none.ring {
    border: 5px solid #fff;
    background: linear-gradient(to bottom right, transparent 42%, #e01010 44%, #e01010 56%, transparent 58%) border-box, #222;
}

.stroke {
    width: 67px;
    border: 5px solid #ddd;
    border-width: 5px 4px;
    background: #000;
}

.trio {
    grid-column: 1 / 3;
    justify-self: start;
    display: flex;
    align-items: center;
    padding-left: 9px;
    gap: 14px;
}

.trio em { font: italic 15px/16px "Liberation Serif", serif; color: #b8b8b8; }

.cornerbox {
    width: 67px;
    border: 1px solid #ddd;
    background: #e2e2e2;
    box-shadow: inset 0 1px #555;
}

.cornerbox::after {
    content: "";
    display: block;
    width: 2px;
    height: 14px;
    margin: 1px 0 0 60px;
    background: #111;
}

.style {
    width: 163px;
    padding-left: 6px;
    background: #e0e0e0;
    color: #222;
    line-height: 18px;
    font-size: 10.500px;
}

.duo {
    grid-column: 2;
    justify-self: end;
    display: flex;
    gap: 9px;
    padding-right: 4px;
}

/* main area */
.main {
    flex: 1;
    display: flex;
    min-height: 0;
}

.tools {
    width: 41px;
    flex: none;
    border-right: 2px solid #232323;
    background: #323232;
}

.thead {
    height: 12px;
    padding: 3px 0 0 6px;
    background: #282828;
}

.grip {
    width: 20px;
    height: 4px;
    margin: 0 auto;
    background: repeating-linear-gradient(90deg, #1c1c1c 0 1px, transparent 1px 2px);
}

.tools .grip { margin: 4px auto 6px; }

.tset {
    display: flex;
    flex-direction: column;
    align-items: center;
    padding: 2px 0 1px;
    border-top: 1px solid #262626;
}

.tset.first { border: 0; padding: 1px 0 0; margin-bottom: -1px; }

.tool {
    width: 29px;
    height: 24px;
    display: flex;
    align-items: center;
    justify-content: center;
    position: relative;
}

.tool.on { height: 23px; }
.first .tool.on { height: 24px; }
.tool.wide { height: 26px; }
.tool svg { width: 19px; height: 19px; }

.tool.more::after {
    content: "";
    position: absolute;
    right: 1px;
    bottom: 2px;
    border: 2px solid transparent;
    border-right-color: #ccc;
    border-bottom-color: #ccc;
}

.colors { gap: 2px; padding-top: 2px; }

.ft {
    display: flex;
    width: 30px;
    height: 13px;
    margin: 5px 0 4px;
    gap: 4px;
}

.ft span { width: 14px; background: #1e1e1e; padding: 3px; }
.ft u { display: block; width: 8px; height: 7px; border: 1px solid #bbb; background: #555; }
.ft b { font: bold 12px/13px "Liberation Serif", serif; color: #bbb; }

.doc {
    width: 1576px;
    flex: none;
    display: flex;
    flex-direction: column;
}

.tabs {
    height: 29px;
    flex: none;
    display: flex;
    background: #262626;
    border-top: 1px solid #202020;
}

.tab {
    width: 168px;
    display: flex;
    align-items: center;
    padding: 2px 0 0 15px;
    border-right: 1px solid #202020;
    color: #8c8c8c;
    font-weight: 600;
    font-size: 11.500px;
}

.tab span { width: 131px; white-space: nowrap; }
.tab.active { background: #323232; color: #e8e8e8; }

.rulerrow { display: flex; height: 17px; flex: none; background: #202020; }
.origin {
    width: 17px;
    border-right: 1px solid #999;
    border-bottom: 1px solid #999;
    background: repeating-linear-gradient(90deg, #888 0 1px, transparent 1px 3px) 0 6px / 100% 1px no-repeat, repeating-linear-gradient(#888 0 1px, transparent 1px 3px) 5px 0 / 1px 100% no-repeat;
}

#hruler, #vruler { background: #202020; }
#hruler text, #vruler text { fill: #eee; font-size: 9.500px; }
#hruler path, #vruler path { stroke: #999; fill: none; }

.work { flex: 1; display: flex; min-height: 0; }

.paste {
    width: 1543px;
    flex: none;
    background: #3e3e3e;
    padding: 7px 0 0 413px;
}

.page {
    width: 610px;
    height: 906px;
    background: #fff;
    box-shadow: 1px 1px 0 1px #111;
    padding: 92px 0 0 87px;
}

.frame {
    position: relative;
    width: 434px;
    height: 717px;
    border: 1px solid #5a96d8;
    font: 17.700px/24.960px "Liberation Serif", serif;
    color: #111;
}

.line {
    height: 24.960px;
    white-space: nowrap;
    word-spacing: -2px;
    text-align: justify;
    text-align-last: justify;
}

.line.title { font-weight: bold; text-align-last: left; word-spacing: 0; }
.line.title span { margin-left: 90px; }

.line u {
    text-decoration: none;
    background: repeating-linear-gradient(90deg, #e25050 0 1px, #fff 1px 2px) 0 calc(100% - 1px) / 100% 1px no-repeat, repeating-linear-gradient(90deg, #fcc 0 1px, #e25050 1px 2px) 0 100% / 100% 1px no-repeat;
}

#story { height: 715px; margin-top: -5px; }

.col {
    position: absolute;
    top: 0;
    bottom: 0;
    width: 1px;
    background: #8a45b8;
}

.c1 { left: 206px; }
.c2 { left: 225px; }

.h {
    position: absolute;
    width: 7px;
    height: 7px;
    border: 1px solid #4a8ad4;
    background: #fff;
}

.tl, .ml, .bl { left: -4px; }
.tm, .bm { left: 213px; }
.tr, .mr, .br { right: -4px; }
.tl, .tm, .tr { top: -4px; }
.ml, .mr { top: 354px; }
.bl, .bm, .br { bottom: -4px; }
.in { left: -5px; top: 19px; width: 9px; height: 9px; }
.blue { left: 342px; top: -4px; width: 8px; height: 8px; background: #4d94ff; }
.yellow { right: -5px; top: 20px; width: 8px; height: 8px; background: #f2e61c; }
.over { position: absolute; right: -5px; top: 688px; }
.anchor { position: absolute; left: -8px; top: 37px; }

.vscroll {
    width: 16px;
    background: #2a2a2a;
    border-left: 1px solid #242424;
    display: flex;
    flex-direction: column;
    align-items: center;
    justify-content: space-between;
    padding-bottom: 2px;
}

.vscroll div {
    width: 14px;
    height: 800px;
    border-radius: 7px;
    background: #474747;
}

.status {
    height: 18px;
    flex: none;
    display: flex;
    align-items: center;
    background: #323232;
    border-top: 1px solid #2a2a2a;
    color: #c8c8c8;
    white-space: nowrap;
}

.status .z { width: 41px; margin-left: 15px; }
.status .nav { margin-left: 7px; width: 60px; margin-right: -10px; }
.status .pg { width: 90px; height: 16px; margin-left: -11px; }
.pg b, .pg i { line-height: 14px; }
.status .nav2 { margin-left: 14px; width: 44px; }
.status .a { margin-right: 5px; }
.status .prof { width: 101px; margin-left: 15px; font-size: 10.800px; }
.status .dot { width: 10px; height: 10px; margin-left: 16px; border-radius: 5px; background: #f03c3c; }
.status .err { width: 72px; margin-left: 6px; color: #eee; font-stretch: 88%; }

.hscroll {
    display: flex;
    align-items: center;
    width: 1016px;
    height: 17px;
    margin-left: 4px;
    padding: 0 8px 0 3px;
    background: #2a2a2a;
    justify-content: space-between;
}

.hscroll div {
    width: 618px;
    height: 15px;
    margin-left: 290px;
    border-radius: 8px;
    background: #474747;
}

.status .split { margin-left: 4px; }
.sizer { width: 9px; height: 10px; margin-left: 7px; background: repeating-conic-gradient(#777 0 25%, transparent 0 50%) 0 0 / 3px 3px; clip-path: polygon(100% 0, 100% 100%, 0 100%); }

.dockgap { width: 41px; flex: none; border-left: 2px solid #232323; border-right: 2px solid #232323; }
.dhead { height: 12px; background: #282828; border-top: 1px solid #202020; display: flex; justify-content: flex-end; padding: 3px 5px 0 0; }

.dock { flex: 1; }
.dset { padding-bottom: 1px; border-bottom: 1px solid #1f1f1f; }
.dset .grip { height: 11px; border: solid #323232; border-width: 4px 0 3px; }

.item {
    height: 28px;
    display: flex;
    align-items: center;
    padding-left: 11px;
    gap: 8px;
    color: #e2e2e2;
    font-weight: 600;
    font-size: 11.500px;
}

.item svg { width: 19px; height: 18px; }

.item.active {
    height: 24px;
    margin: 2px 4px 2px 5px;
    padding-left: 5px;
    background: #1f1f1f;
    border: 1px solid #3c3c3c;
    border-radius: 2px;
}

/* layers panel */
.layers {
    position: absolute;
    left: 1331px;
    top: 106px;
    width: 327px;
    height: 439px;
    display: flex;
    flex-direction: column;
    background: #323232;
    border: solid #1f1f1f;
    border-width: 3px 2px 1px 1px;
}

.ptabs {
    height: 28px;
    flex: none;
    display: flex;
    background: #262626;
    color: #8c8c8c;
    font-weight: 600;
    font-size: 11.200px;
}

.ptab {
    display: flex;
    align-items: center;
    justify-content: center;
    border-right: 1px solid #202020;
}

.ptab.active { width: 70px; gap: 5px; background: #323232; color: #e8e8e8; }
.w2 { width: 48px; padding-left: 5px; }
.w3 { width: 71px; }
.w4 { width: 69px; }

.pmenu {
    flex: 1;
    display: flex;
    align-items: center;
    justify-content: flex-end;
    padding-right: 5px;
    gap: 7px;
}

.pmenu u { width: 1px; height: 11px; background: #777; }

.row {
    display: flex;
    height: 22px;
    margin: 3px 1px 0 0;
    border-bottom: 1px solid #3e3e3e;
}

.eye { width: 22px; padding: 6px 0 0 5px; border-right: 1px solid #3e3e3e; }
.lock { width: 27px; border-right: 4px solid #5b92ea; }

.name {
    flex: 1;
    display: flex;
    align-items: center;
    margin-left: 2px;
    padding-left: 7px;
    gap: 3px;
    background: #3a546c;
    color: #fff;
    font-weight: bold;
    font-size: 10.500px;
}

.name .pen { margin-left: auto; }
.name u { width: 6px; height: 6px; margin: 0 9px 0 9px; background: #5b9cf5; outline: 1px solid #111; }

.pbody { flex: 1; border-bottom: 1px solid #3e3e3e; }
.pfoot { height: 24px; display: flex; align-items: center; justify-content: flex-end; gap: 16px; padding-right: 23px; }
.pend { height: 8px; border-top: 2px solid #1f1f1f; }

/* pages panel */
.pages {
    position: absolute;
    left: 1234px;
    top: 292px;
    width: 327px;
    height: 647px;
    display: flex;
    flex-direction: column;
    border: 1px solid #202020;
    border-radius: 3px 3px 0 0;
    background: #323232;
    box-shadow: 0 0 3px rgba(0, 0, 0, .4);
}

.phead {
    height: 13px;
    display: flex;
    align-items: center;
    justify-content: flex-end;
    gap: 12px;
    padding-right: 5px;
    background: #262626;
    border-bottom: 1px solid #202020;
}

.pages .ptabs { height: 27px; }
.pages .ptab.active { width: 62px; padding-right: 5px; }

.masters {
    height: 195px;
    padding: 4px 25px 0 3px;
    border-bottom: 2px solid #3e3e3e;
}

.master { display: flex; height: 61px; color: #f0f0f0; }
.master span { flex: 1; padding-top: 3px; font-size: 9.800px; }

.thumb {
    width: 37px;
    height: 54px;
    padding: 3px 4px;
    border: 1px solid #888;
    background: #fff;
}

.thumb + .thumb { margin-left: -1px; }
.thumb i {
    display: block;
    height: 46px;
    background:
        repeating-linear-gradient(90deg, #5aa0e0 0 1px, transparent 1px 4px) 0 0 / 100% 1px no-repeat,
        repeating-linear-gradient(90deg, #5aa0e0 0 1px, transparent 1px 4px) 0 100% / 100% 1px no-repeat,
        repeating-linear-gradient(#5aa0e0 0 1px, transparent 1px 4px) 0 0 / 1px 100% no-repeat,
        repeating-linear-gradient(#5aa0e0 0 1px, transparent 1px 4px) 100% 0 / 1px 100% no-repeat;
}

.spread { flex: 1; padding: 4px 0 0 156px; }

.mark {
    width: 0;
    margin-left: 13px;
    border: 5px solid transparent;
    border-top-color: #999;
    border-bottom-width: 0;
}

.spread .pthumb {
    position: relative;
    width: 37px;
    height: 55px;
    margin-top: 1px;
    padding: 4px 5px 4px 3px;
    border: 1px solid #888;
    background: #94c2f4;
}

.pthumb::before {
    content: "";
    position: absolute;
    left: -1px;
    top: -7px;
    width: 1px;
    height: 66px;
    background: #888;
}

.pthumb span {
    position: absolute;
    right: 0;
    top: 0;
    width: 12px;
    height: 11px;
    background: #fff;
    color: #000;
    font: bold 10px/11px "DejaVu Sans", sans-serif;
}

#mini div { height: 1px; margin-bottom: 1px; background: #1d548c; }

.num {
    width: 13px;
    height: 14px;
    margin: 5px 0 0 10px;
    background: #2d8ceb;
    color: #fff;
    font-weight: bold;
    text-align: center;
}

.pgfoot {
    height: 26px;
    display: flex;
    align-items: center;
    border-top: 1px solid #272727;
    padding: 0 24px 0 5px;
    color: #f4f4f4;
    font-size: 10px;
    letter-spacing: -.2px;
    white-space: nowrap;
}

.pgfoot span { flex: 1; padding-top: 3px; }
.pgfoot svg + svg { margin-left: 14px; }
.presize { height: 8px; border-top: 2px solid #1f1f1f; padding-top: 1px; }

.marks {
    position: absolute;
    left: 0;
    top: 0;
    pointer-events: none;
}

.marks ellipse { fill: none; stroke: #d2262e; stroke-width: 3; }
```

FILE: script.js
```js
var MM = 4.41;

// horizontal ruler, zero sits at the left page edge
var d = '', t = '';
for (var i = -93; i < 200; i++) {
    var x = Math.round(412.5 + i * MM) + .5;
    if (x < 0) continue;
    var len = i % 10 === 0 ? 17 : i % 5 === 0 ? 5 : 3;
    d += 'M' + x + ' 17v-' + len;
    if (i % 10 === 0) t += '<text x="' + (x + 1.5) + '" y="9">' + Math.abs(i) + '</text>';
}
document.getElementById('hruler').innerHTML =
    '<path d="' + d + 'M0 16.5h1559"/><path d="M93.500 0v17" stroke-dasharray="1 2"/>' + t;

// vertical ruler, digits are stacked
d = '';
t = '';
for (var j = -1; j < 208; j++) {
    var y = Math.round(6 + j * MM) + .5;
    var l = j % 10 === 0 ? 17 : j % 5 === 0 ? 5 : 3;
    d += 'M17 ' + y + 'h-' + l;
    if (j >= 0 && j % 10 === 0) {
        String(j).split('').forEach((c, k) => {
            t += '<text x="2.500" y="' + (y + 9.5 + k * 9) + '">' + c + '</text>';
        });
    }
}
document.getElementById('vruler').innerHTML =
    '<path d="' + d + 'M16.500 0v920"/><path d="M0 188.500h17" stroke-dasharray="1 2"/>' + t;

// story lines: [width, text], words between underscores fail the spell check
var lines = [
    [230, ''],
    [0, ''],
    [320, 'Die Episode _mit_ Leonardo war also _beendet_.'],
    [433, '_Während_ er _sich_ _wohl_ in _seinem_ _Wanderurlaub_ auf _Fuerte-_'],
    [433, '_ventura_ _erholte_, _brauchte_ _ich_ erst _eibmal_ _eine_ _schöpferische_'],
    [433, 'Pause – _zu_ _Hause_ (_Zufallsreim!_). _Bisher_ _hatte_ _ich_ _nicht_ den'],
    [433, '_Eindruck_, _dass_ _sich_ _viele_ _ernsthafte_ _Sucher_ auf _Flirtplattfor-_'],
    [433, '_men_ _tummeln_. _Die_ _meisten_ _Männer_ _wollen_ _offenbar_ _nur_ _ein_'],
    [433, '_schnelles_ _Abenteuer_ – in _seltenen_ _Fällen_ _vielleicht_ _auch_ _ein_'],
    [433, '_etwas_ _längeres_. _Zum_ _Zeitvertreib_ war das _Flirten_ _ja_ _ganz_ _amü-_'],
    [433, '_sant_. Wen – _und_ was! – _hatte_ _ich_ _nicht_ _schon_ _alles_ _kennen-_'],
    [387, '_gelernt!_ Aber _etwas_ _Ernsthaftes_ war _bisher_ _nicht_ _dabei_'],
    [0, ''],
    [433, 'Nun – _ich_ will _ehrlich_ _sein_. _Wollte_ _ich_ _überhaupt_ _etwas_'],
    [87, '_Ernsthaftes_?'],
    [433, '_Zwei_ _Männer_ _waren_ es _bisher_, _von_ _denen_ _ich_ _mir_ _etwas_ _mehr_'],
    [292, '_versprochen_ _hatte_: _Gerrit_ _und_ Leonardo.'],
    [217, '_Beide_ Male die _Enttäuschung_!'],
    [433, 'Nun _ja_… _ich_ will _nochmals_ _ehrlich_ _sein_: _Tief_ _traurig_ war _ich_'],
    [433, '_nicht_. _Schließlich_ bin _ich_ _nicht_ _mehr_ _jung_ _und_ _naiv_ – _und_'],
    [433, '_richtig_ _verliebt_ war _ich_ _ja_ _auch_ _nicht_. _Als_ _ich_ _mit_ Leonardo'],
    [433, '_korrespondierte_, _kamen_ _zwar_ _hin_ _und_ _wieder_ _ein_ _paar_ _Ge-_'],
    [147, '_fühlsregungen_ _auf_…'],
    [280, '_Aber_ _jetzt_ – _nach_ _dem_ _Live-Desaster_…'],
    [433, '_Ich_ _führte_ _schließlich_ _ein_ _geregeltes_ _Leben_ – _und_ es _ging_ _wei-_'],
    [37, '_ter_…'],
    [213, '_zwei_ _Monate_ _lang_ _ganz_ _ruhig_.'],
    [0, ''],
    [425, '_Mittlerweile_ war es _April_. _Hatte_ _ich_ _etwa_ _Frühlingsgefühle_?']
];

var html = '<div class="line title">10 <span><u>Neue</u> <u>Plattform</u></span></div>';
lines.slice(1).forEach((l) => {
    html += '<div class="line" style="width:' + l[0] + 'px">' + l[1].replace(/_(.+?)_/g, '<u>$1</u>') + '</div>';
});
document.getElementById('story').innerHTML = html;

// page thumbnail repeats the same line lengths
document.getElementById('mini').innerHTML = lines.slice(0, 23).map((l) =>
    '<div style="width:' + Math.round(l[0] / 16) + 'px"></div>').join('');
```
